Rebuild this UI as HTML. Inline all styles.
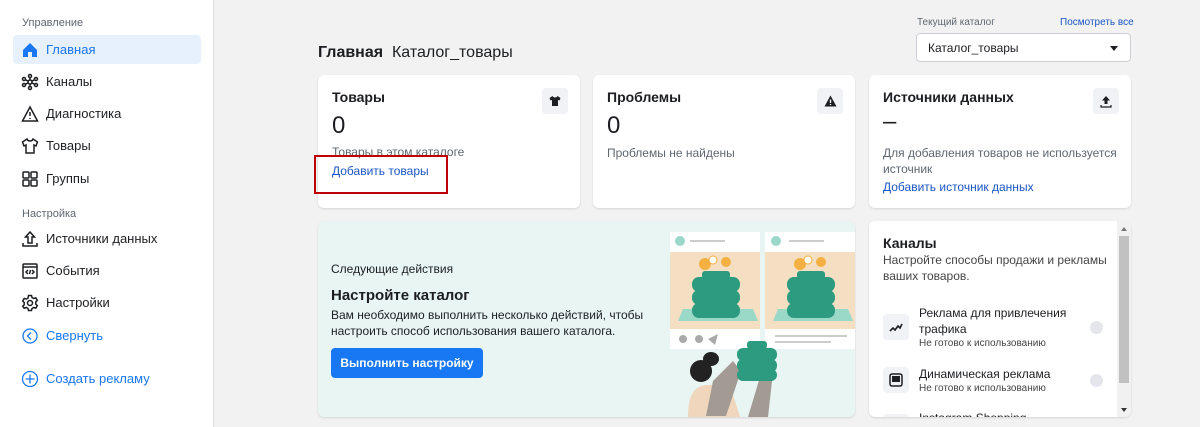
<!DOCTYPE html>
<html><head><meta charset="utf-8"><style>
*{box-sizing:border-box;margin:0;padding:0}
body{width:1200px;height:427px;overflow:hidden;background:#f2f2f2;font-family:"Liberation Sans",Arial,sans-serif;color:#1c1e21;position:relative;font-size:13px}
.side{position:absolute;left:0;top:0;width:214px;height:427px;background:#fff;border-right:1px solid #dadde1}
.sec{position:absolute;left:22px;font-size:11px;color:#606770}
.item{position:absolute;left:13px;width:188px;height:29px;border-radius:4px;display:flex;align-items:center;padding-left:8px;font-size:13px;color:#1c1e21}
.item svg{width:18px;height:18px;margin-right:7px}
.item.act{background:#e7f0fd;color:#1877f2}
.card{position:absolute;background:#fff;border-radius:6px;box-shadow:0 1px 2px rgba(0,0,0,.12)}
.ct{position:absolute;left:14px;top:14px;font-size:14px;font-weight:bold}
.num{position:absolute;left:14px;top:37px;font-size:24px}
.ic{position:absolute;right:12px;top:13px;width:26px;height:26px;background:#f0f2f5;border-radius:4px;display:flex;align-items:center;justify-content:center}
.sub{position:absolute;left:14px;font-size:12px;color:#606770;line-height:16px}
.lnk{position:absolute;left:14px;font-size:12px;color:#1a55c4}
</style></head><body>
<div class="side">
<div class="sec" style="top:17px">Управление</div>
<div class="item act" style="top:35px"><svg viewBox="0 0 18 18"><path d="M2 9L9 2l7 7v7h-5v-5H7v5H2z" fill="#1877f2"/></svg>Главная</div>
<div class="item" style="top:67px"><svg viewBox="0 0 18 18" fill="none" stroke="#1c1e21" stroke-width="1.5"><circle cx="9" cy="9" r="2"/><circle cx="9" cy="3" r="1.5"/><circle cx="9" cy="15" r="1.5"/><circle cx="3" cy="6" r="1.5"/><circle cx="15" cy="6" r="1.5"/><circle cx="3" cy="12" r="1.5"/><circle cx="15" cy="12" r="1.5"/><path d="M9 5v2M9 11v2M4.5 6.8l2.8 1.4M13.5 6.8l-2.8 1.4M4.5 11.2l2.8-1.4M13.5 11.2l-2.8-1.4"/></svg>Каналы</div>
<div class="item" style="top:99px"><svg viewBox="0 0 18 18" fill="none" stroke="#1c1e21" stroke-width="1.5"><path d="M9 2L1.5 16h15z"/><path d="M9 7v4M9 13v1"/></svg>Диагностика</div>
<div class="item" style="top:131px"><svg viewBox="0 0 18 18" fill="none" stroke="#1c1e21" stroke-width="1.5"><path d="M6 2L1.5 5l1.5 4 2-1v8h8V8l2 1 1.5-4L12 2c-.5 1.5-1.5 2-3 2S6.5 3.5 6 2z"/></svg>Товары</div>
<div class="item" style="top:164px"><svg viewBox="0 0 18 18" fill="none" stroke="#1c1e21" stroke-width="1.5"><rect x="2" y="2" width="6" height="6" rx="1"/><rect x="10" y="2" width="6" height="6" rx="1"/><rect x="2" y="10" width="6" height="6" rx="1"/><rect x="10" y="10" width="6" height="6" rx="1"/></svg>Группы</div>
<div class="sec" style="top:208px">Настройка</div>
<div class="item" style="top:224px"><svg viewBox="0 0 18 18" fill="none" stroke="#1c1e21" stroke-width="1.5"><path d="M9 2L4.5 7H7v6h4V7h2.5z"/><path d="M2 13v3h14v-3"/></svg>Источники данных</div>
<div class="item" style="top:256px"><svg viewBox="0 0 18 18" fill="none" stroke="#1c1e21" stroke-width="1.5"><rect x="2" y="2" width="14" height="14" rx="1"/><path d="M2 5h14M7 8l-2 2 2 2M11 8l2 2-2 2M9.5 8l-1 4"/></svg>События</div>
<div class="item" style="top:288px"><svg viewBox="0 0 18 18" fill="none" stroke="#1c1e21" stroke-width="1.5"><circle cx="9" cy="9" r="2.5"/><path d="M7.5 1.5h3l.5 2 1.8 1 2-.7 1.5 2.6-1.5 1.4v2.4l1.5 1.4-1.5 2.6-2-.7-1.8 1-.5 2h-3l-.5-2-1.8-1-2 .7L1.7 12.2l1.5-1.4V8.4L1.7 7l1.5-2.6 2 .7 1.8-1z"/></svg>Настройки</div>
<div class="item" style="top:321px;color:#1877f2"><svg viewBox="0 0 18 18" fill="none" stroke="#1877f2" stroke-width="1.3"><circle cx="9" cy="9" r="7"/><path d="M10 5.5L6.5 9l3.5 3.5"/></svg>Свернуть</div>
<div class="item" style="top:364px;color:#1877f2"><svg viewBox="0 0 18 18" fill="none" stroke="#1877f2" stroke-width="1.3"><circle cx="9" cy="9" r="7.5"/><path d="M9 4.5v9M4.5 9h9"/></svg>Создать рекламу</div>
</div>

<div style="position:absolute;left:318px;top:44px;font-size:16px"><b>Главная</b>&nbsp; Каталог_товары</div>
<div style="position:absolute;left:917px;top:17px;font-size:10px;color:#606770">Текущий каталог</div>
<div style="position:absolute;left:1060px;top:17px;font-size:10px;color:#1a55c4">Посмотреть все</div>
<div style="position:absolute;left:916px;top:33px;width:215px;height:29px;background:#fff;border:1px solid #ccd0d5;border-radius:4px;font-size:12px;padding:7px 0 0 11px">Каталог_товары<span style="position:absolute;right:12px;top:12px;border:4px solid transparent;border-top:5px solid #1c1e21;border-bottom:0"></span></div>

<div class="card" style="left:318px;top:75px;width:262px;height:133px">
<div class="ct">Товары</div><div class="ic"><svg width="12" height="12" viewBox="0 0 12 12"><path d="M3.5 1L0.5 3l1 2.5 1.5-.5V11h6V5l1.5.5 1-2.5-3-2C8 2 7 2.5 6 2.5S4 2 3.5 1z" fill="#1c1e21"/></svg></div>
<div class="num">0</div><div class="sub" style="top:69px">Товары в этом каталоге</div><div class="lnk" style="top:89px">Добавить товары</div>
</div>
<div style="position:absolute;left:314px;top:155px;width:134px;height:39px;border:2px solid #c00000"></div>
<div class="card" style="left:593px;top:75px;width:262px;height:133px">
<div class="ct">Проблемы</div><div class="ic"><svg width="13" height="12" viewBox="0 0 13 12"><path d="M6.5 0.5L0.5 11.5h12z" fill="#1c1e21"/><path d="M6.5 4.5v3.5M6.5 9v1" stroke="#fff" stroke-width="1.3"/></svg></div>
<div class="num">0</div><div class="sub" style="top:70px">Проблемы не найдены</div>
</div>
<div class="card" style="left:869px;top:75px;width:262px;height:133px">
<div class="ct">Источники данных</div><div class="ic"><svg width="12" height="13" viewBox="0 0 12 13"><path d="M6 1L2 5.5h2.5V9h3V5.5H10z" fill="#1c1e21"/><path d="M1 10v2h10v-2" stroke="#1c1e21" stroke-width="1.2" fill="none"/></svg></div>
<div class="num" style="top:33px">–</div><div class="sub" style="top:70px">Для добавления товаров не используется<br>источник</div><div class="lnk" style="top:105px">Добавить источник данных</div>
</div>

<div class="card" style="left:318px;top:221px;width:537px;height:196px;background:#e8f5f3;overflow:hidden">
<div style="position:absolute;left:13px;top:41px;font-size:12px">Следующие действия</div>
<div style="position:absolute;left:13px;top:66px;font-size:15px;font-weight:bold">Настройте каталог</div>
<div style="position:absolute;left:13px;top:86px;font-size:12px;line-height:16px;color:#1c1e21">Вам необходимо выполнить несколько действий, чтобы<br>настроить способ использования вашего каталога.</div>
<div style="position:absolute;left:13px;top:127px;width:152px;height:30px;background:#1877f2;border-radius:4px;color:#fff;font-weight:bold;font-size:12px;text-align:center;line-height:30px">Выполнить настройку</div>
<svg style="position:absolute;left:342px;top:0" width="195" height="196" viewBox="342 0 195 196">
<rect x="352" y="11" width="90" height="117" fill="#fff"/><rect x="447" y="11" width="90" height="117" fill="#fff"/>
<circle cx="362" cy="20" r="5" fill="#9ad9c7"/><rect x="372" y="19" width="35" height="2" fill="#ccc"/>
<circle cx="458" cy="20" r="5" fill="#9ad9c7"/><rect x="471" y="19" width="35" height="2" fill="#ccc"/>
<rect x="352" y="31" width="90" height="77" fill="#f4dfc2"/><rect x="447" y="31" width="90" height="77" fill="#f4dfc2"/>
<polygon points="360,100 440,100 435,88 365,88" fill="#9ad9c7"/><polygon points="455,100 535,100 530,88 460,88" fill="#9ad9c7"/>
<g fill="#2d9b7f"><rect x="374" y="56" width="48" height="15" rx="7"/><rect x="374" y="69" width="48" height="15" rx="7"/><rect x="374" y="82" width="48" height="15" rx="7"/><rect x="384" y="50" width="28" height="8" rx="3"/>
<rect x="469" y="56" width="48" height="15" rx="7"/><rect x="469" y="69" width="48" height="15" rx="7"/><rect x="469" y="82" width="48" height="15" rx="7"/><rect x="479" y="50" width="28" height="8" rx="3"/></g>
<circle cx="387" cy="43" r="6" fill="#f5b042"/><circle cx="408" cy="41" r="5" fill="#f5b042"/><circle cx="395" cy="39" r="4" fill="#fff" stroke="#f5b042"/>
<circle cx="482" cy="43" r="6" fill="#f5b042"/><circle cx="503" cy="41" r="5" fill="#f5b042"/><circle cx="490" cy="39" r="4" fill="#fff" stroke="#f5b042"/>
<rect x="457" y="114" width="72" height="2" fill="#ccc"/><rect x="457" y="120" width="56" height="2" fill="#ccc"/>
<circle cx="365" cy="118" r="4" fill="#aaa"/><circle cx="381" cy="118" r="4" fill="#aaa"/><polygon points="390,118 400,113 397,124" fill="#aaa"/>
<path d="M370 196c0-18 4-32 20-32h22l10 32z" fill="#efd6bc"/>
<path d="M395 160l20-20 8 10-15 45h-20z" fill="#a39a94"/><path d="M430 196l15-50 10 5-5 45z" fill="#a39a94"/>
<circle cx="383" cy="150" r="11" fill="#222"/><ellipse cx="393" cy="138" rx="8" ry="7" fill="#222"/>
<g fill="#2d9b7f"><rect x="419" y="127" width="40" height="13" rx="6"/><rect x="419" y="138" width="40" height="13" rx="6"/><rect x="419" y="148" width="40" height="12" rx="6"/><rect x="429" y="120" width="20" height="8" rx="3"/></g>
</svg>
</div>

<div class="card" style="left:869px;top:221px;width:262px;height:196px;overflow:hidden">
<div style="position:absolute;left:14px;top:14px;font-size:14px;font-weight:bold">Каналы</div>
<div style="position:absolute;left:14px;top:31px;font-size:12px;line-height:16px;color:#444">Настройте способы продажи и рекламы<br>ваших товаров.</div>
<div style="position:absolute;left:14px;top:93px;width:26px;height:26px;background:#f0f2f5;border-radius:4px"><svg width="26" height="26"><path d="M7 17l3-3 2 2 3-4 2 2 2-4" stroke="#1c1e21" stroke-width="1.6" fill="none"/></svg></div>
<div style="position:absolute;left:50px;top:84px;font-size:12px;line-height:16px">Реклама для привлечения<br>трафика</div>
<div style="position:absolute;left:50px;top:117px;font-size:10px;color:#444">Не готово к использованию</div>
<div style="position:absolute;left:221px;top:100px;width:13px;height:13px;border-radius:50%;background:#e4e6eb"></div>
<div style="position:absolute;left:14px;top:146px;width:26px;height:26px;background:#f0f2f5;border-radius:4px"><svg width="26" height="26"><rect x="7" y="7" width="12" height="12" rx="2" stroke="#1c1e21" stroke-width="1.5" fill="none"/><rect x="9" y="9" width="8" height="6" fill="#1c1e21"/></svg></div>
<div style="position:absolute;left:50px;top:146px;font-size:12px">Динамическая реклама</div>
<div style="position:absolute;left:50px;top:162px;font-size:10px;color:#444">Не готово к использованию</div>
<div style="position:absolute;left:221px;top:153px;width:13px;height:13px;border-radius:50%;background:#e4e6eb"></div>
<div style="position:absolute;left:14px;top:193px;width:26px;height:26px;background:#f0f2f5;border-radius:4px"></div>
<div style="position:absolute;left:50px;top:190px;font-size:12px">Instagram Shopping</div>
<div style="position:absolute;left:248px;top:0;width:14px;height:196px;background:#f1f1f1"><div style="position:absolute;left:4px;top:6px;border:3px solid transparent;border-bottom:4px solid #777;border-top:0"></div><div style="position:absolute;left:2px;top:15px;width:10px;height:147px;background:#c1c1c1"></div><div style="position:absolute;left:4px;top:187px;border:3px solid transparent;border-top:4px solid #333;border-bottom:0"></div></div>
</div>
</body></html>
